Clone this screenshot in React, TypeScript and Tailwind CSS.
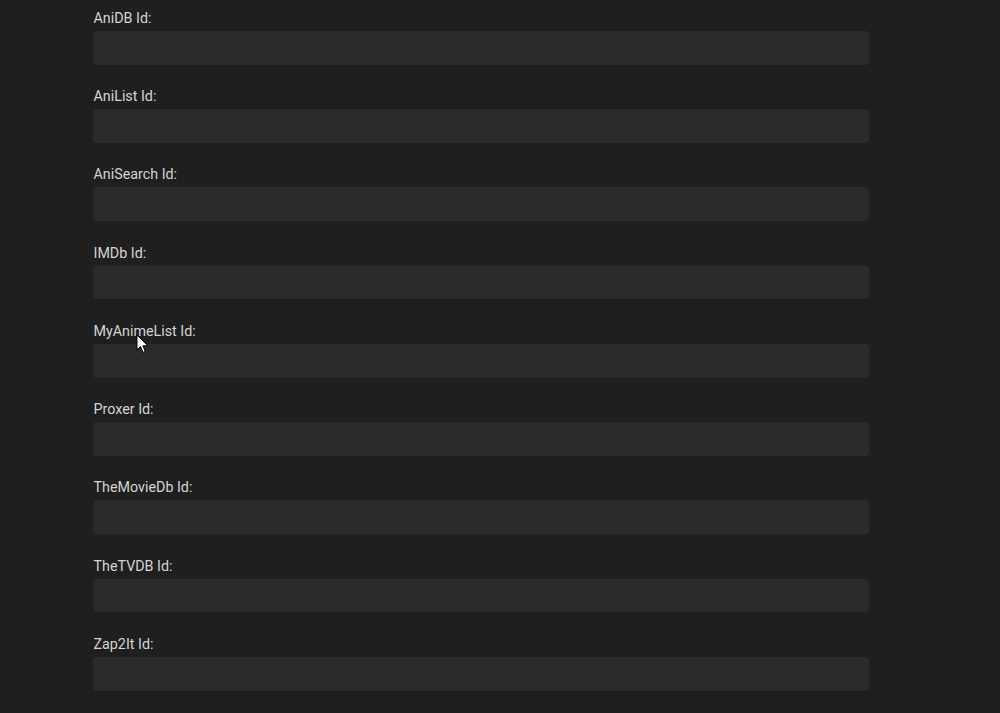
import React from 'react'

const fields = [
    'AniDB Id:',
    'AniList Id:',
    'AniSearch Id:',
    'IMDb Id:',
    'MyAnimeList Id:',
    'Proxer Id:',
    'TheMovieDb Id:',
    'TheTVDB Id:',
    'Zap2It Id:',
]

// mouse pointer that sits over the page in the screenshot
const Cursor: React.FC = () => (
    <svg
        className="absolute left-[136px] top-[334px] pointer-events-none"
        width="13"
        height="20"
        viewBox="0 0 13 20"
    >
        <path
            d="M1 1 L1 16 L4.5 12.5 L7 18.5 L9.3 17.5 L6.9 11.8 L11.8 11.8 Z"
            fill="#ffffff"
            stroke="#000000"
            strokeWidth="1"
            strokeLinejoin="round"
        />
    </svg>
)

const App: React.FC = () => {
    return (
        <div
            className="relative min-h-screen w-full overflow-hidden bg-[#1f1f1f] pt-[8px] pl-[93px]"
            style={{ fontFamily: 'Roboto, "Noto Sans", "Liberation Sans", sans-serif' }}
        >
            <form className="w-[776px]">
                {fields.map((label) => (
                    <div key={label} className="mb-[21.6px] flex flex-col">
                        <label className="mb-[3px] pl-[0.5px] text-[14.3px] leading-[20px] text-[#d4d4d4]">
                            {label}
                        </label>
                        <input
                            type="text"
                            className="h-[33.65px] w-full rounded-[4px] bg-[#2b2b2b] px-2 text-[15px] text-white outline-none"
                        />
                    </div>
                ))}
            </form>
            <Cursor />
        </div>
    )
}

export default App
